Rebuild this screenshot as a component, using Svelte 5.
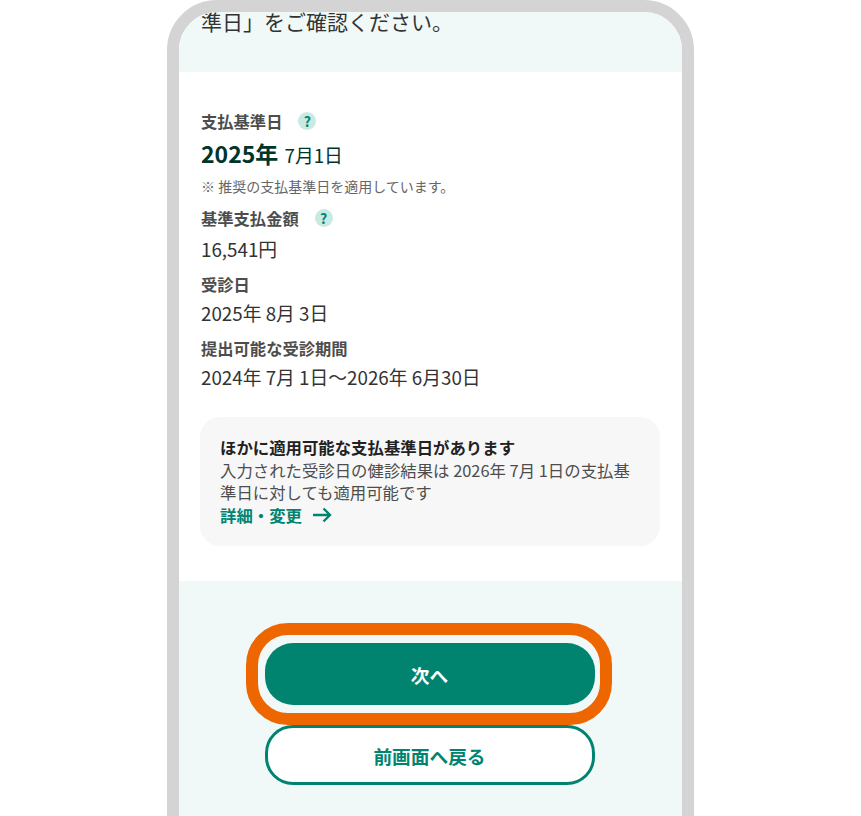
<script>
	const details = [
		{ label: '受診日', value: '2025年 8月 3日' },
		{ label: '提出可能な受診期間', value: '2024年 7月 1日〜2026年 6月30日' }
	];
</script>

<div class="page">
	<div class="phone">
		<section class="intro">
			<p>準日」をご確認ください。</p>
		</section>

		<section class="summary">
			<h3>支払基準日 <span class="help">?</span></h3>
			<p class="date"><strong>2025年</strong> 7月1日</p>
			<p class="note">※ 推奨の支払基準日を適用しています。</p>

			<h3>基準支払金額 <span class="help">?</span></h3>
			<p class="value amount">16,541円</p>

			{#each details as item}
				<h3>{item.label}</h3>
				<p class="value">{item.value}</p>
			{/each}

			<div class="notice">
				<b>ほかに適用可能な支払基準日があります</b>
				<p>入力された受診日の健診結果は 2026年 7月 1日の支払基準日に対しても適用可能です</p>
				<a href="#change">
					詳細・変更
					<svg width="20" height="16" viewBox="0 0 20 16" fill="none" stroke="currentColor" stroke-width="2.4">
						<path d="M1 8h17M11.5 1.5L18 8l-6.5 6.5" />
					</svg>
				</a>
			</div>
		</section>

		<section class="actions">
			<div class="next-wrap">
				<button class="next">次へ</button>
				<span class="ring"></span>
			</div>
			<button class="back">前画面へ戻る</button>
		</section>
	</div>
</div>

<style>
	:global(body) {
		background: #fff;
		font-family: 'Noto Sans CJK JP', 'Noto Sans', sans-serif;
	}

	.page {
		height: 816px;
		overflow: hidden;
	}

	.phone {
		box-sizing: border-box;
		width: 527px;
		margin-left: 167px;
		border: 12px solid #d4d4d4;
		border-radius: 50px;
		overflow: hidden;
		background: #fff;
		color: #333;
	}

	p,
	h3 {
		margin: 0;
	}

	.intro {
		height: 60px;
		padding: 0 22px;
		background: #f0f9f8;
	}

	.intro p {
		font-size: 21px;
		line-height: 18px;
	}

	.summary {
		padding: 37px 22px 35px 22px;
	}

	h3 {
		display: flex;
		align-items: center;
		gap: 16px;
		height: 24px;
		margin-top: 8px;
		font-size: 16.3px;
		font-weight: 700;
		color: #4d4d4d;
	}

	h3:first-child {
		margin-top: 0;
	}

	.value + h3 {
		margin-top: 9px;
	}

	.help {
		width: 18px;
		height: 18px;
		border-radius: 50%;
		background: #c8eae3;
		color: #008470;
		font-size: 14px;
		line-height: 18px;
		text-align: center;
	}

	.date {
		margin-top: 2px;
		font-size: 18.8px;
		line-height: 36px;
		color: #00352c;
	}

	.date strong {
		margin-right: 2px;
		font-size: 23px;
	}

	.note {
		margin-top: 1px;
		font-size: 14px;
		line-height: 24px;
		color: #666;
	}

	.value {
		margin-top: 3px;
		font-size: 18.8px;
		line-height: 28px;
	}

	.amount {
		margin-top: 5px;
	}

	.notice {
		margin-top: 26px;
		margin-left: -1px;
		padding: 19px 20px 20px 20px;
		border-radius: 20px;
		background: #f7f7f7;
		font-size: 16.4px;
		line-height: 22.5px;
		color: #4d4d4d;
	}

	.notice b {
		display: block;
		color: #222;
	}

	.notice a {
		display: flex;
		align-items: center;
		gap: 10px;
		font-weight: 700;
		color: #008470;
		text-decoration: none;
	}

	.actions {
		display: flex;
		flex-direction: column;
		align-items: center;
		padding: 62px 2px 200px 0;
		background: #f0f9f8;
	}

	button {
		display: block;
		width: 330px;
		font-family: inherit;
		font-size: 18.7px;
		font-weight: 700;
	}

	.next-wrap {
		position: relative;
		margin-bottom: 20px;
	}

	.next {
		height: 62px;
		border: 0;
		border-radius: 28px;
		background: #008470;
		color: #fff;
	}

	.ring {
		position: absolute;
		inset: -20px -17px -20px -19px;
		border: 12px solid #ee6600;
		border-radius: 42px;
	}

	.back {
		height: 60px;
		border: 3px solid #008470;
		border-radius: 28px;
		background: #fff;
		color: #008470;
	}
</style>
